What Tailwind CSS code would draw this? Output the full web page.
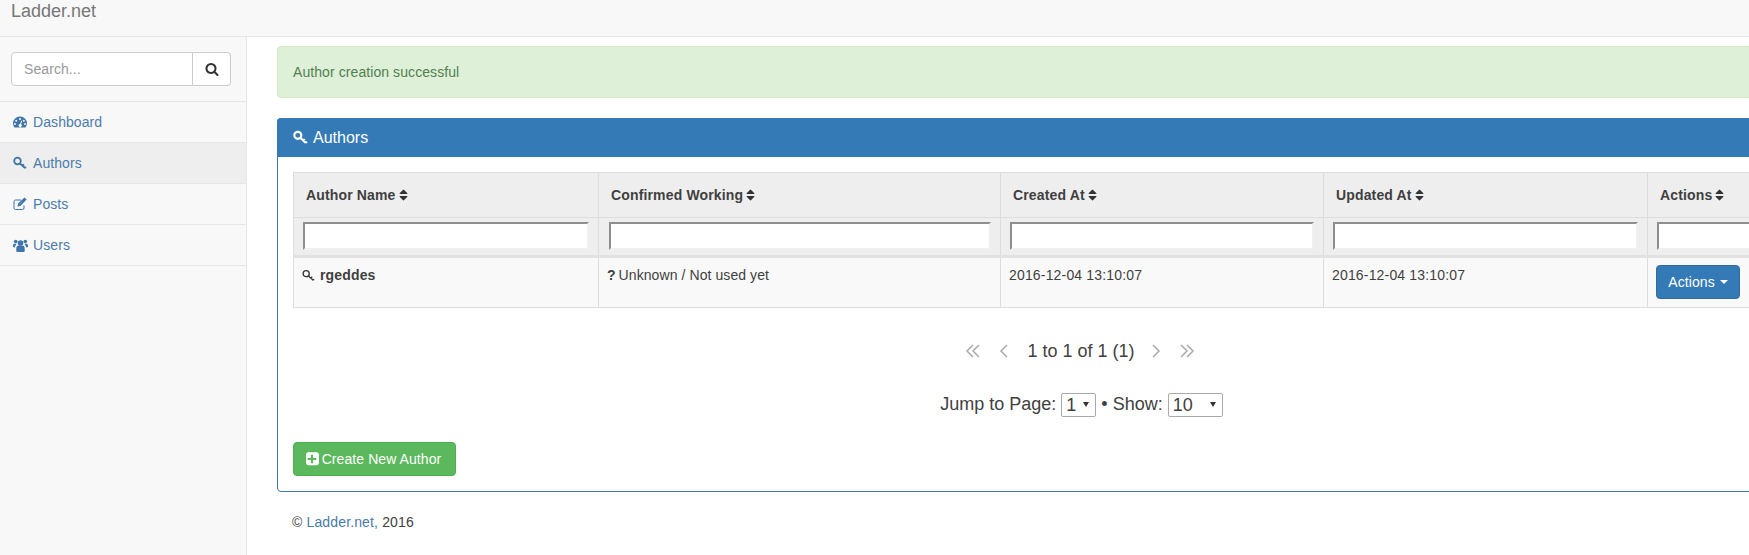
<!DOCTYPE html>
<html lang="en">
<head>
<meta charset="utf-8">
<title>Ladder.net</title>
<script src="https://cdn.jsdelivr.net/npm/@tailwindcss/browser@4"></script>
</head>
<body class="h-[555px] w-[1749px] overflow-hidden bg-white font-['Liberation_Sans',Arial,sans-serif] text-[14px] leading-5 tracking-[0.08px] text-[#3f3f3f]">
<header class="h-[37px] border-b border-[#e7e7e7] bg-[#f8f8f8] pl-[11px]">
  <a class="block text-[18px] leading-[22px] tracking-normal text-[#777]">Ladder.net</a>
</header>
<div class="flex h-[518px]">
  <aside class="w-[247px] shrink-0 border-r border-[#e7e7e7] bg-[#f8f8f8]">
    <div class="h-[65px] border-b border-[#e7e7e7] pl-[11px] pt-[15px]">
      <div class="flex h-[34px] w-[220px]">
        <div class="flex flex-1 items-center rounded-l border border-[#ccc] bg-white pl-3 text-[#999]">Search...</div>
        <div class="flex w-[38px] items-center justify-center rounded-r border border-l-0 border-[#ccc] bg-white">
          <svg class="h-[14px] w-[14px] fill-[#333]" viewBox="0 0 1792 1792"><path d="M1216 832q0-185-131.5-316.5t-316.5-131.5-316.5 131.5-131.5 316.5 131.5 316.5 316.5 131.5 316.5-131.5 131.5-316.5zm512 832q0 52-38 90t-90 38q-54 0-90-38l-343-342q-179 124-399 124-143 0-273.5-55.5t-225-150-150-225-55.5-273.5 55.5-273.5 150-225 225-150 273.5-55.5 273.5 55.5 225 150 150 225 55.5 273.5q0 220-124 399l343 343q37 37 37 90z"/></svg>
        </div>
      </div>
    </div>
    <nav class="text-[#4a7cab]">
      <a class="flex h-[41px] items-center gap-[6px] border-b border-[#e7e7e7] pl-[13px]">
        <svg class="h-[14px] w-[14px] fill-[#3f75a8]" viewBox="0 0 14 14"><path fill-rule="evenodd" d="M7 1.500A6.800 6.800 0 0 0 0 8.300c0 1.500.5 2.800 1.300 3.900l.3.3h10.800l.3-.3A6.600 6.600 0 0 0 14 8.300 6.800 6.800 0 0 0 7 1.500zM7 3a1 1 0 1 1 0 2.100A1 1 0 0 1 7 3zM3.200 4.700a1 1 0 1 1 0 2 1 1 0 0 1 0-2zM10.800 4.700a1 1 0 1 1 0 2 1 1 0 0 1 0-2zM2 8.100a1 1 0 1 1 0 2 1 1 0 0 1 0-2zM12 8.100a1 1 0 1 1 0 2 1 1 0 0 1 0-2zM8.300 5.600l.8.3-1.100 3.400a1.500 1.500 0 1 1-.9-.2z"/></svg>
        <span>Dashboard</span>
      </a>
      <a class="flex h-[41px] items-center gap-[6px] border-b border-[#e7e7e7] bg-[#eee] pl-[13px]">
        <svg class="h-[14px] w-[14px] fill-none stroke-[#3f75a8]" viewBox="0 0 14 14" stroke-width="1.800"><circle cx="4.500" cy="5" r="3.300"/><path d="M7 7.500l5 4.500M9.500 9.800l1.500-1.500M12 12l1-1"/></svg>
        <span>Authors</span>
      </a>
      <a class="flex h-[41px] items-center gap-[6px] border-b border-[#e7e7e7] pl-[13px]">
        <svg class="h-[14px] w-[14px] fill-none stroke-[#3f75a8]" viewBox="0 0 14 14" stroke-width="1"><path d="M11 8.500V11a1.500 1.500 0 0 1-1.500 1.500H2.500A1.500 1.500 0 0 1 1 11V4.500A1.500 1.500 0 0 1 2.500 3H8"/><path stroke-width="1.600" d="M5.500 8.500l.3-1.500L11.500 1.500l1 1L7 8.200z"/></svg>
        <span>Posts</span>
      </a>
      <a class="flex h-[41px] items-center gap-[5px] border-b border-[#e7e7e7] pl-[13px]">
        <svg class="h-[14px] w-[15px] fill-[#3f75a8]" viewBox="0 0 15 14"><circle cx="7.500" cy="5" r="2.800"/><circle cx="2.700" cy="3.500" r="1.800"/><circle cx="12.300" cy="3.500" r="1.800"/><path d="M3.300 13v-2.500c0-1.800 1-3 2-3h4.400c1 0 2 1.200 2 3V13c0 .5-.5 1-1 1H4.300c-.5 0-1-.5-1-1zM0 9V7.500C0 6.300.8 5.700 1.700 5.700h1.800c-.3 1-1.500 1.500-1.500 3.800zM15 9V7.500c0-1.200-.8-1.800-1.700-1.800h-1.800c.3 1 1.500 1.500 1.500 3.800z"/></svg>
        <span>Users</span>
      </a>
    </nav>
  </aside>
  <main class="min-w-0 flex-1 overflow-hidden pl-[30px] pt-[9px]">
    <div class="flex h-[52px] w-[1600px] items-center rounded border border-[#d6e9c6] bg-[#dff0d8] pl-[15px] text-[#4f7f50]">Author creation successful</div>
    <section class="mt-[20px] h-[374px] w-[1606px] rounded border border-[#3a7ba8]">
      <div class="-m-px flex h-[39px] items-center gap-[5px] rounded-t bg-[#337ab7] pl-[16px] text-[16px] tracking-normal text-white">
        <svg class="h-[15px] w-[15px] fill-none stroke-white" viewBox="0 0 14 14" stroke-width="2"><circle cx="4.500" cy="5" r="3.300"/><path d="M7 7.500l5 4.500M9.500 9.800l1.500-1.500M12 12l1-1"/></svg>
        <span>Authors</span>
      </div>
      <div class="px-[15px] pt-[16px]">
        <table class="w-[1574px] table-fixed border-collapse border border-[#ddd]">
          <colgroup><col class="w-[305px]"><col class="w-[402px]"><col class="w-[323px]"><col class="w-[324px]"><col class="w-[220px]"></colgroup>
          <thead class="bg-[#eee] font-bold tracking-[0.15px]">
            <tr class="h-[45px]">
              <th class="border border-[#ddd] pl-[12px] text-left"><span class="inline-flex items-center gap-[3px]">Author Name <svg class="h-[12px] w-[9px] fill-[#333]" viewBox="320 200 1152 1392"><path d="M1408 1088q0 26-19 45l-448 448q-19 19-45 19t-45-19l-448-448q-19-19-19-45t19-45 45-19h896q26 0 45 19t19 45zm0-384q0 26-19 45t-45 19h-896q-26 0-45-19t-19-45 19-45l448-448q19-19 45-19t45 19l448 448q19 19 19 45z"/></svg></span></th>
              <th class="border border-[#ddd] pl-[12px] text-left"><span class="inline-flex items-center gap-[3px]">Confirmed Working <svg class="h-[12px] w-[9px] fill-[#333]" viewBox="320 200 1152 1392"><path d="M1408 1088q0 26-19 45l-448 448q-19 19-45 19t-45-19l-448-448q-19-19-19-45t19-45 45-19h896q26 0 45 19t19 45zm0-384q0 26-19 45t-45 19h-896q-26 0-45-19t-19-45 19-45l448-448q19-19 45-19t45 19l448 448q19 19 19 45z"/></svg></span></th>
              <th class="border border-[#ddd] pl-[12px] text-left"><span class="inline-flex items-center gap-[3px]">Created At <svg class="h-[12px] w-[9px] fill-[#333]" viewBox="320 200 1152 1392"><path d="M1408 1088q0 26-19 45l-448 448q-19 19-45 19t-45-19l-448-448q-19-19-19-45t19-45 45-19h896q26 0 45 19t19 45zm0-384q0 26-19 45t-45 19h-896q-26 0-45-19t-19-45 19-45l448-448q19-19 45-19t45 19l448 448q19 19 19 45z"/></svg></span></th>
              <th class="border border-[#ddd] pl-[12px] text-left"><span class="inline-flex items-center gap-[3px]">Updated At <svg class="h-[12px] w-[9px] fill-[#333]" viewBox="320 200 1152 1392"><path d="M1408 1088q0 26-19 45l-448 448q-19 19-45 19t-45-19l-448-448q-19-19-19-45t19-45 45-19h896q26 0 45 19t19 45zm0-384q0 26-19 45t-45 19h-896q-26 0-45-19t-19-45 19-45l448-448q19-19 45-19t45 19l448 448q19 19 19 45z"/></svg></span></th>
              <th class="border border-[#ddd] pl-[12px] text-left"><span class="inline-flex items-center gap-[3px]">Actions <svg class="h-[12px] w-[9px] fill-[#333]" viewBox="320 200 1152 1392"><path d="M1408 1088q0 26-19 45l-448 448q-19 19-45 19t-45-19l-448-448q-19-19-19-45t19-45 45-19h896q26 0 45 19t19 45zm0-384q0 26-19 45t-45 19h-896q-26 0-45-19t-19-45 19-45l448-448q19-19 45-19t45 19l448 448q19 19 19 45z"/></svg></span></th>
            </tr>
            <tr class="h-[39px] border-b-[3px] border-[#e2e2e2]">
              <td class="border-x border-[#ddd] pl-[9px] pr-[9px]"><input class="mb-[2px] block h-[28px] w-full border-2 border-[#f0f0f0] border-t-[#8f8f8f] border-l-[#8f8f8f] bg-white" aria-label="Author Name"></td>
              <td class="border-x border-[#ddd] pl-[10px] pr-[9px]"><input class="mb-[2px] block h-[28px] w-full border-2 border-[#f0f0f0] border-t-[#8f8f8f] border-l-[#8f8f8f] bg-white" aria-label="Confirmed Working"></td>
              <td class="border-x border-[#ddd] pl-[9px] pr-[9px]"><input class="mb-[2px] block h-[28px] w-full border-2 border-[#f0f0f0] border-t-[#8f8f8f] border-l-[#8f8f8f] bg-white" aria-label="Created At"></td>
              <td class="border-x border-[#ddd] pl-[9px] pr-[9px]"><input class="mb-[2px] block h-[28px] w-full border-2 border-[#f0f0f0] border-t-[#8f8f8f] border-l-[#8f8f8f] bg-white" aria-label="Updated At"></td>
              <td class="border-x border-[#ddd] pl-[9px] pr-[9px]"><input class="mb-[2px] block h-[28px] w-full border-2 border-[#f0f0f0] border-t-[#8f8f8f] border-l-[#8f8f8f] bg-white" aria-label="Actions"></td>
            </tr>
          </thead>
          <tbody class="bg-[#f9f9f9]">
            <tr class="h-[51px]">
              <td class="border border-[#ddd] pl-[8px] pt-[7px] align-top"><span class="inline-flex items-center gap-[5px] font-bold tracking-[0.15px]"><svg class="h-[13px] w-[13px] fill-none stroke-[#333]" viewBox="0 0 14 14" stroke-width="1.400"><circle cx="4.500" cy="5" r="3.300"/><path d="M7 7.500l5 4.500M9.500 9.800l1.500-1.500M12 12l1-1"/></svg>rgeddes</span></td>
              <td class="border border-[#ddd] pl-[8px] pt-[7px] align-top"><b class="mr-[-1px]">?</b> Unknown / Not used yet</td>
              <td class="border border-[#ddd] pl-[8px] pt-[7px] align-top tracking-[0.17px]">2016-12-04 13:10:07</td>
              <td class="border border-[#ddd] pl-[8px] pt-[7px] align-top tracking-[0.17px]">2016-12-04 13:10:07</td>
              <td class="border border-[#ddd] pb-[2px] pl-[8px] align-middle">
                <button class="flex h-[34px] w-[84px] items-center justify-center gap-[5px] rounded border border-[#2e6da4] bg-[#337ab7] text-white">Actions <span class="h-0 w-0 border-x-[4px] border-t-[4px] border-x-transparent border-t-white"></span></button>
              </td>
            </tr>
          </tbody>
        </table>
        <div class="mt-[30px] flex h-[26px] w-[1574px] items-center justify-center text-[18px] leading-[26px] tracking-normal">
          <svg class="h-[14px] w-[16px] fill-none stroke-[#aaa]" viewBox="0 0 16 14" stroke-width="1.500"><path d="M8 1L2 7l6 6M14 1L8 7l6 6"/></svg>
          <svg class="ml-[18px] h-[14px] w-[9px] fill-none stroke-[#aaa]" viewBox="0 0 9 14" stroke-width="1.500"><path d="M8 1L2 7l6 6"/></svg>
          <span class="ml-[19px] mr-[17px]">1 to 1 of 1 (1)</span>
          <svg class="h-[14px] w-[9px] fill-none stroke-[#aaa]" viewBox="0 0 9 14" stroke-width="1.500"><path d="M1 1l6 6-6 6"/></svg>
          <svg class="ml-[18px] h-[14px] w-[16px] fill-none stroke-[#aaa]" viewBox="0 0 16 14" stroke-width="1.500"><path d="M2 1l6 6-6 6M8 1l6 6-6 6"/></svg>
        </div>
        <div class="mt-[27px] flex h-[26px] w-[1574px] items-center justify-center gap-[5px] pl-[3px] text-[18px] leading-[26px] tracking-normal">
          <span>Jump to Page:</span>
          <span class="relative block h-[24px] w-[35px]">
            <select aria-label="Jump to Page" class="h-[24px] w-full appearance-none rounded-[2px] border border-[#aaa] bg-white pl-[4px] leading-[22px]"><option>1</option></select>
            <span class="absolute right-[7px] top-[10px] h-0 w-0 border-x-[3px] border-t-[5px] border-x-transparent border-t-[#333]"></span>
          </span>
          <span>• Show:</span>
          <span class="relative block h-[24px] w-[55px]">
            <select aria-label="Show" class="h-[24px] w-full appearance-none rounded-[2px] border border-[#aaa] bg-white pl-[4px] leading-[22px]"><option>10</option></select>
            <span class="absolute right-[7px] top-[10px] h-0 w-0 border-x-[3px] border-t-[5px] border-x-transparent border-t-[#333]"></span>
          </span>
        </div>
        <button class="mt-[25px] flex h-[34px] w-[163px] items-center justify-center gap-[3px] rounded border border-[#4cae4c] bg-[#5cb85c] pr-[2px] text-white">
          <svg class="h-[14px] w-[13px] fill-white" viewBox="128 128 1536 1536"><path d="M1344 960v-128q0-26-19-45t-45-19h-320v-320q0-26-19-45t-45-19h-128q-26 0-45 19t-19 45v320h-320q-26 0-45 19t-19 45v128q0 26 19 45t45 19h320v320q0 26 19 45t45 19h128q26 0 45-19t19-45v-320h320q26 0 45-19t19-45zm320-576v960q0 119-84.500 203.500t-203.500 84.500h-960q-119 0-203.500-84.500t-84.500-203.500v-960q0-119 84.500-203.500t203.500-84.500h960q119 0 203.500 84.500t84.500 203.500z"/></svg>
          <span>Create New Author</span>
        </button>
      </div>
    </section>
    <p class="mt-[20px] pl-[15px] tracking-[0.14px]">© <a class="text-[#4a7cab]">Ladder.net,</a> 2016</p>
  </main>
</div>
</body>
</html>
